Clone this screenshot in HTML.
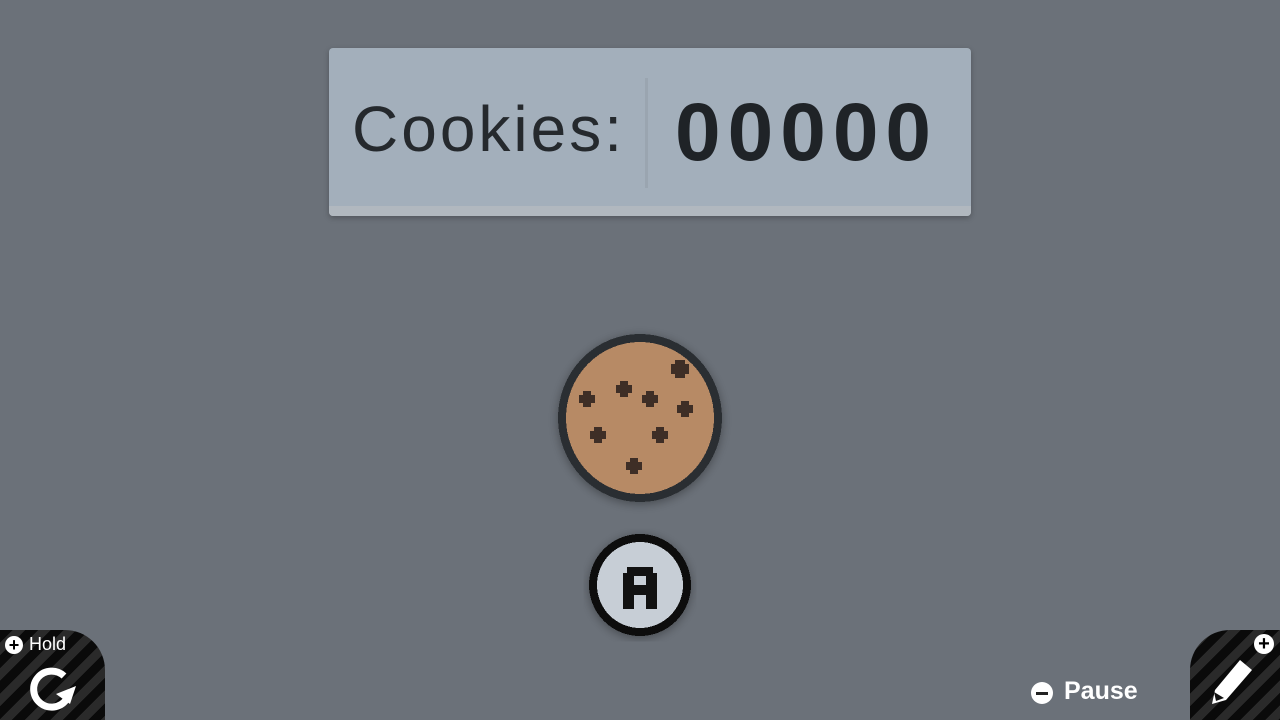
<!DOCTYPE html>
<html><head><style>
html,body{margin:0;width:1280px;height:720px;overflow:hidden;background:#6b7179;font-family:"Liberation Sans",sans-serif}
.panel{position:absolute;left:329px;top:48px;width:642px;height:168px;background:#a3afbb;border-radius:4px;box-shadow:0 2px 6px rgba(0,0,0,.25);overflow:hidden}
.panel .strip{position:absolute;left:0;right:0;bottom:0;height:10px;background:#b1b8bf}
.lbl{position:absolute;left:23px;top:44px;font-size:64px;color:#25292d;letter-spacing:3px;font-weight:300}
.sep{position:absolute;left:316px;top:30px;width:3px;height:110px;background:#9aa5b0}
.num{position:absolute;left:346px;top:38px;font-size:82px;font-weight:bold;color:#1f2327;letter-spacing:7px}
.corner{position:absolute;bottom:0;width:105px;height:90px;background:repeating-linear-gradient(135deg,#0a0a0a 0 9px,#2a2a2a 9px 18px)}
</style></head><body>
<div class="panel"><div class="lbl">Cookies:</div><div class="sep"></div><div class="num">00000</div><div class="strip"></div></div>

<svg width="1280" height="720" style="position:absolute;left:0;top:0" shape-rendering="crispEdges">
<defs><filter id="sh"><feDropShadow dx="0" dy="2" stdDeviation="5" flood-opacity=".35"/></filter></defs>
<ellipse cx="640" cy="418" rx="78" ry="80" fill="#b78a65" stroke="#2b2f33" stroke-width="8" filter="url(#sh)"/>
<g fill="#3e2e26">
<path d="M675 360h10v4h4v10h-4v4h-10v-4h-4v-10h4z"/>
<path d="M620 381h8v4h4v8h-4v4h-8v-4h-4v-8h4z"/>
<path d="M583 391h8v4h4v8h-4v4h-8v-4h-4v-8h4z"/>
<path d="M646 391h8v4h4v8h-4v4h-8v-4h-4v-8h4z"/>
<path d="M681 401h8v4h4v8h-4v4h-8v-4h-4v-8h4z"/>
<path d="M594 427h8v4h4v8h-4v4h-8v-4h-4v-8h4z"/>
<path d="M656 427h8v4h4v8h-4v4h-8v-4h-4v-8h4z"/>
<path d="M630 458h8v4h4v8h-4v4h-8v-4h-4v-8h4z"/>
</g>
<circle cx="640" cy="585" r="47" fill="#c7ced6" stroke="#111" stroke-width="8" filter="url(#sh)"/>
<path d="M627 567h26v6h4v36h-11v-14h-12v14h-11v-36h4z M634 576v9h12v-9z" fill="#111" fill-rule="evenodd"/>
</svg>

<div class="corner" style="left:0;border-top-right-radius:40px"></div>
<div style="position:absolute;left:5px;top:636px;width:18px;height:18px;border-radius:50%;background:#fff;color:#000;font:bold 18px/18px 'Liberation Sans';text-align:center">+</div>
<div style="position:absolute;left:29px;top:634px;color:#fff;font-size:18px">Hold</div>
<svg style="position:absolute;left:26px;top:664px" width="54" height="48" viewBox="0 0 54 48"><path d="M38 12A18 18 0 1 0 40 36" fill="none" stroke="#fff" stroke-width="7"/><path d="M50 22L30 30L44 40Z" fill="#fff"/></svg>

<div class="corner" style="right:0;width:90px;border-top-left-radius:40px"></div>
<div style="position:absolute;left:1254px;top:634px;width:20px;height:20px;border-radius:50%;background:#fff;color:#000;font:bold 20px/20px 'Liberation Sans';text-align:center">+</div>
<svg style="position:absolute;left:1208px;top:656px" width="50" height="50" viewBox="0 0 50 50"><path d="M32 4l12 10-26 30-14 4 3-14z" fill="#fff"/><path d="M6 36l2 9 8-3" fill="#111"/></svg>

<div style="position:absolute;left:1031px;top:682px;width:22px;height:22px;border-radius:50%;background:#fff"><div style="position:absolute;left:5px;top:10px;width:12px;height:3px;background:#222"></div></div>
<div style="position:absolute;left:1064px;top:677px;color:#fff;font-size:25px;font-weight:bold">Pause</div>
</body></html>
